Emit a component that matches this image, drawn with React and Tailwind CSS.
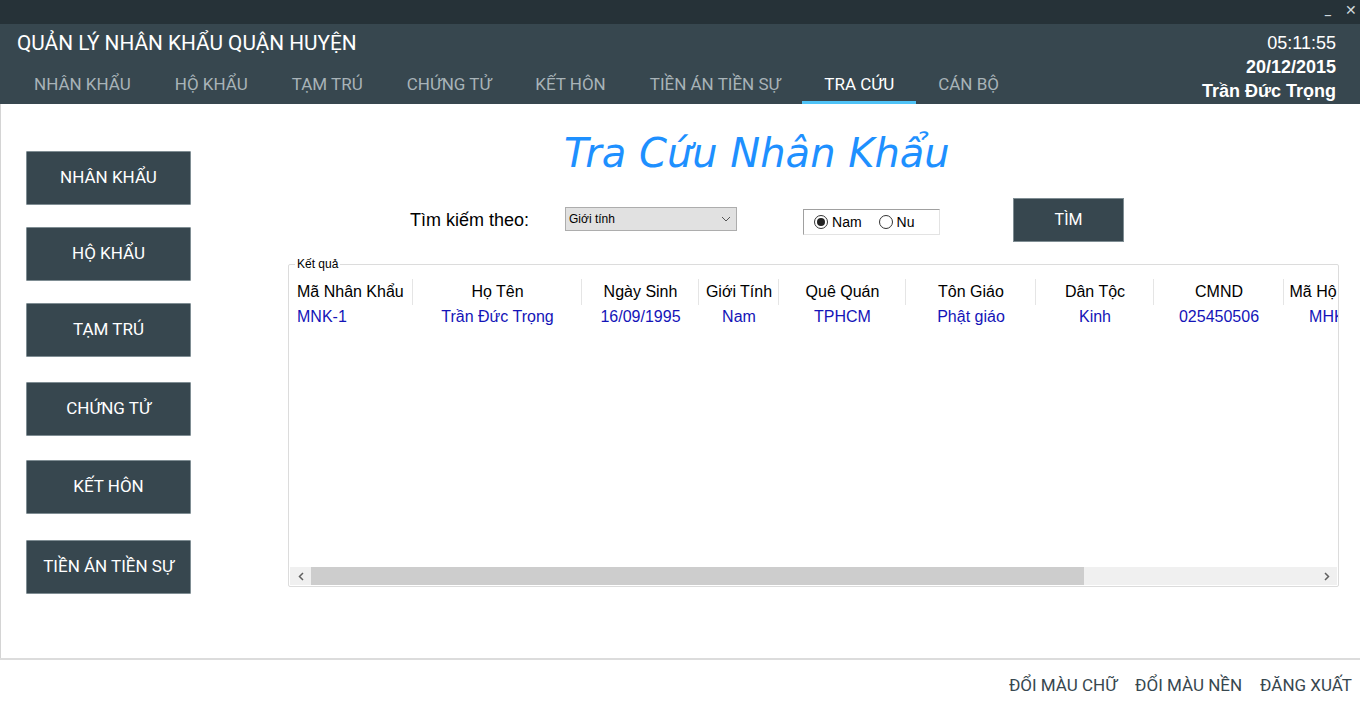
import React from 'react'

const tabs = ['NHÂN KHẨU', 'HỘ KHẨU', 'TẠM TRÚ', 'CHỨNG TỬ', 'KẾT HÔN', 'TIỀN ÁN TIỀN SỰ', 'TRA CỨU', 'CÁN BỘ']
const sideButtons = [
  { label: 'NHÂN KHẨU', mt: 'mt-[47px]' },
  { label: 'HỘ KHẨU', mt: 'mt-[22px]' },
  { label: 'TẠM TRÚ', mt: 'mt-[22px]' },
  { label: 'CHỨNG TỬ', mt: 'mt-[25px]' },
  { label: 'KẾT HÔN', mt: 'mt-[24px]' },
  { label: 'TIỀN ÁN TIỀN SỰ', mt: 'mt-[26px]' },
]

const columns = [
  { title: 'Mã Nhân Khẩu', value: 'MNK-1', w: 'w-[124px]', left: true },
  { title: 'Họ Tên', value: 'Trần Đức Trọng', w: 'w-[169px]' },
  { title: 'Ngày Sinh', value: '16/09/1995', w: 'w-[117px]' },
  { title: 'Giới Tính', value: 'Nam', w: 'w-[80px]' },
  { title: 'Quê Quán', value: 'TPHCM', w: 'w-[127px]' },
  { title: 'Tôn Giáo', value: 'Phật giáo', w: 'w-[130px]' },
  { title: 'Dân Tộc', value: 'Kinh', w: 'w-[118px]' },
  { title: 'CMND', value: '025450506', w: 'w-[130px]' },
  { title: 'Mã Hộ Khẩu', value: 'MHK-1', w: 'w-[100px]' },
]

const Radio = ({ checked, label }) => (
  <label className="flex items-center gap-[4px]">
    <span className="w-[14px] h-[14px] rounded-full border border-[#333] bg-white flex items-center justify-center">
      {checked && <span className="w-[8px] h-[8px] rounded-full bg-[#222]" />}
    </span>
    <span className="text-[14px] text-black">{label}</span>
  </label>
)

const App = () => {
  return (
    <div className="w-[1360px] h-[713px] flex flex-col bg-white overflow-hidden" style={{ fontFamily: 'Roboto, "Noto Sans", sans-serif' }}>
      {/* title bar */}
      <div className="h-[24px] bg-[#263238] flex justify-end items-start text-[#cfd8dc] text-[14px] pr-[2px]">
        <span className="mr-[14px] mt-[1px] leading-[18px]">_</span>
        <span className="mr-[1px] mt-[1px] leading-[18px]">✕</span>
      </div>

      {/* header */}
      <div className="h-[80px] bg-[#37474f] flex justify-between">
        <div className="flex flex-col">
          <div className="text-white text-[20.8px] leading-[24px] pl-[17px] pt-[7px]">QUẢN LÝ NHÂN KHẨU QUẬN HUYỆN</div>
          <div className="flex pl-[12px] mt-[12px]">
            {tabs.map((t) => (
              <div
                key={t}
                className={
                  'px-[22px] h-[37px] pt-[6px] text-[17px] leading-[22px] border-b-[3px] ' +
                  (t === 'TRA CỨU' ? 'text-white border-[#4fc3f7]' : 'text-[#a8b3b8] border-transparent')
                }
              >
                {t}
              </div>
            ))}
          </div>
        </div>
        <div className="flex flex-col items-end pr-[24px] pt-[7px] text-white text-[18px] leading-[24px]" style={{ fontFamily: '"Liberation Sans", Arial, sans-serif' }}>
          <span>05:11:55</span>
          <span className="font-bold">20/12/2015</span>
          <span className="font-bold">Trần Đức Trọng</span>
        </div>
      </div>

      {/* main */}
      <div className="flex-1 flex border-l border-[#d4d4d4]">
        <div className="w-[287px] shrink-0 flex flex-col pl-[25px]">
          {sideButtons.map((b) => (
            <button
              key={b.label}
              className={b.mt + ' w-[165px] h-[54px] bg-[#37474f] border border-[#7f8d93] rounded-[1px] text-white text-[17px] flex items-center justify-center'}
            >
              {b.label}
            </button>
          ))}
        </div>

        <div className="flex-1 min-w-0 flex flex-col pr-[21px]">
          <div
            className="pl-[276px] pt-[25px] text-[40px] leading-[48px] italic text-[#1e90ff] whitespace-nowrap"
            style={{ fontFamily: '"DejaVu Sans", Verdana, sans-serif' }}
          >
            Tra Cứu Nhân Khẩu
          </div>

          <div className="flex items-center h-[44px] mt-[21px]" style={{ fontFamily: '"Liberation Sans", Arial, sans-serif' }}>
            <span className="ml-[122px] text-[18px] text-black whitespace-nowrap">Tìm kiếm theo:</span>
            <div className="ml-[36px] w-[172px] h-[24px] bg-[#e1e1e1] border border-[#adadad] flex items-center justify-between px-[3px] mb-[2px]">
              <span className="text-[12px] text-black">Giới tính</span>
              <svg width="10" height="6" viewBox="0 0 10 6" className="mr-[2px]">
                <path d="M1 1l4 4 4-4" fill="none" stroke="#555" strokeWidth="1" />
              </svg>
            </div>
            <div className="ml-[66px] w-[137px] h-[26px] bg-white border border-[#e3e3e3] border-t-[#a0a0a0] border-l-[#a0a0a0] flex items-center gap-[17px] pl-[10px] mt-[4px]">
              <Radio checked label="Nam" />
              <Radio label="Nu" />
            </div>
            <button
              className="ml-[73px] w-[111px] h-[44px] bg-[#37474f] border border-[#7f8d93] text-white text-[16px] flex items-center justify-center"
              style={{ fontFamily: 'Roboto, sans-serif' }}
            >
              TÌM
            </button>
          </div>

          {/* group box */}
          <div
            className="relative mt-[22px] h-[323px] border border-[#dcdcdc] rounded-[2px] flex flex-col"
            style={{ fontFamily: '"Liberation Sans", Arial, sans-serif' }}
          >
            <span className="absolute -top-[9px] left-[6px] bg-white px-[2px] text-[12px] leading-[16px] text-black">Kết quả</span>
            <div className="flex-1 overflow-hidden pt-[14px]">
              <div className="flex">
                {columns.map((c, i) => (
                  <div key={c.title} className={c.w + ' shrink-0 flex flex-col'}>
                    <div className="h-[26px] flex items-center relative">
                      <span className={'w-full text-[16px] leading-[20px] text-black whitespace-nowrap ' + (c.left ? 'pl-[8px]' : 'text-center')}>{c.title}</span>
                      {i < columns.length - 1 && <span className="absolute right-0 top-0 h-[26px] w-px bg-[#e5e5e5]" />}
                    </div>
                    <div className={'h-[24px] text-[16px] leading-[24px] text-[#1414b8] whitespace-nowrap ' + (c.left ? 'pl-[8px]' : 'text-center')}>{c.value}</div>
                  </div>
                ))}
              </div>
            </div>
            {/* scrollbar */}
            <div className="h-[18px] mx-[1px] mb-[1px] bg-[#f0f0f0] flex items-center">
              <div className="w-[21px] h-full flex items-center justify-center">
                <svg width="6" height="9" viewBox="0 0 6 9"><path d="M5 1L1.5 4.5 5 8" fill="none" stroke="#606060" strokeWidth="1.5" /></svg>
              </div>
              <div className="w-[773px] h-full bg-[#cdcdcd]" />
              <div className="flex-1" />
              <div className="w-[21px] h-full flex items-center justify-center">
                <svg width="6" height="9" viewBox="0 0 6 9"><path d="M1 1l3.5 3.5L1 8" fill="none" stroke="#606060" strokeWidth="1.5" /></svg>
              </div>
            </div>
          </div>
        </div>
      </div>

      {/* footer */}
      <div className="h-[55px] border-t-2 border-[#dcdcdc] flex justify-end items-center gap-[18px] pr-[8px] pb-[2px] text-[17px] text-[#37474f]">
        <span>ĐỔI MÀU CHỮ</span>
        <span>ĐỔI MÀU NỀN</span>
        <span>ĐĂNG XUẤT</span>
      </div>
    </div>
  )
}

export default App
